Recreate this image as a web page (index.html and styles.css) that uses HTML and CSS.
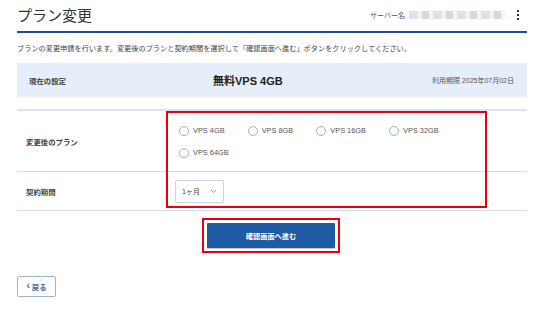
FILE: index.html
```html
<!DOCTYPE html>
<html lang="ja">
<head>
    <meta charset="UTF-8">
    <meta name="viewport" content="width=device-width, initial-scale=1.0">
    <title>プラン変更</title>
    <link rel="stylesheet" href="styles.css">
</head>
<body>
    <div class="page">
        <header class="page-header">
            <h1>プラン変更</h1>
            <div class="server">
                <span class="server-label">サーバー名</span>
                <span class="server-name"></span>
                <span class="kebab"><i></i><i></i><i></i></span>
            </div>
        </header>

        <p class="lead">プランの変更申請を行います。変更後のプランと契約期間を選択して「確認画面へ進む」ボタンをクリックしてください。</p>

        <div class="current">
            <span class="current-label">現在の設定</span>
            <span class="current-plan">無料VPS 4GB</span>
            <span class="current-limit">利用期限 2025年07月02日</span>
        </div>

        <div class="form-table">
            <div class="row">
                <div class="row-label">変更後のプラン</div>
                <div class="row-value">
                    <div class="radios">
                        <label class="radio"><span class="circle"></span>VPS 4GB</label>
                        <label class="radio"><span class="circle"></span>VPS 8GB</label>
                        <label class="radio"><span class="circle"></span>VPS 16GB</label>
                        <label class="radio"><span class="circle"></span>VPS 32GB</label>
                        <label class="radio"><span class="circle"></span>VPS 64GB</label>
                    </div>
                </div>
            </div>
            <div class="row row-term">
                <div class="row-label">契約期間</div>
                <div class="row-value">
                    <div class="select">
                        <span>1ヶ月</span>
                        <svg width="7" height="5" viewBox="0 0 7 5"><path d="M1 1l2.5 2.5L6 1" fill="none" stroke="#8a9bb3" stroke-width="1"/></svg>
                    </div>
                </div>
            </div>
            <div class="highlight highlight-fields"></div>
        </div>

        <div class="actions">
            <div class="submit-wrap">
                <button class="submit">確認画面へ進む</button>
            </div>
        </div>

        <button class="back"><span class="back-arrow">‹</span>戻る</button>
    </div>
</body>
</html>
```

FILE: styles.css
```css
* {
    margin: 0;
    padding: 0;
    box-sizing: border-box;
}

body {
    font-family: "Liberation Sans", "Noto Sans CJK JP", sans-serif;
    background: #fff;
    color: #333;
}

.page {
    width: 510px;
    margin-left: 17px;
}

.page-header {
    display: flex;
    justify-content: space-between;
    align-items: center;
    height: 33px;
    border-bottom: 2px solid #1f4e99;
}

h1 {
    font-size: 15px;
    font-weight: normal;
    color: #333;
    line-height: 1;
    margin-top: -1px;
}

.server {
    display: flex;
    align-items: center;
    margin-top: -1px;
}

.server-label {
    font-size: 7px;
    color: #555;
    margin-right: 4px;
}

.server-name {
    display: block;
    width: 96px;
    height: 8px;
    background: repeating-linear-gradient(90deg, #d8dbe0 0 9px, #eceef1 9px 13px, #c9cdd3 13px 20px, #f2f3f5 20px 24px);
    opacity: 0.8;
}

.kebab {
    display: flex;
    flex-direction: column;
    gap: 2px;
    margin-left: 12px;
    margin-right: 8px;
}

.kebab i {
    display: block;
    width: 2px;
    height: 2px;
    background: #333;
}

.lead {
    font-size: 7.2px;
    color: #444;
    margin-top: 11px;
    line-height: 10px;
}

.current {
    display: flex;
    align-items: center;
    height: 34px;
    margin-top: 9px;
    padding: 0 13px 0 12px;
    background: #e6eff9;
}

.current-label {
    width: 184px;
    font-size: 7.4px;
    font-weight: bold;
    color: #444;
}

.current-plan {
    font-size: 11px;
    font-weight: bold;
    color: #222;
}

.current-limit {
    margin-left: auto;
    font-size: 7px;
    color: #555;
}

.form-table {
    position: relative;
    margin-top: 12px;
    border-top: 2px solid #dde3ec;
}

.row {
    display: flex;
    align-items: center;
    border-bottom: 1px solid #d3dbe6;
}

.row:first-child {
    height: 61px;
}

.row-term {
    height: 39px;
}

.row-label {
    width: 158px;
    padding-left: 9px;
    font-size: 7.4px;
    font-weight: bold;
    color: #444;
}

.row-value {
    width: 310px;
}

.radios {
    display: flex;
    flex-wrap: wrap;
    column-gap: 23px;
    row-gap: 11px;
    padding-left: 4px;
    margin-top: 1px;
}

.radio {
    display: flex;
    align-items: center;
    gap: 4px;
    font-size: 7.4px;
    color: #555;
    line-height: 11px;
}

.circle {
    display: block;
    width: 10px;
    height: 10px;
    border: 1px solid #9fb0c5;
    border-radius: 50%;
    background: #fff;
}

.select {
    display: flex;
    align-items: center;
    justify-content: space-between;
    width: 49px;
    height: 23px;
    padding: 0 6px 0 6px;
    border: 1px solid #c9d3e0;
    border-radius: 2px;
    font-size: 7px;
    color: #444;
}

.highlight {
    position: absolute;
    border: 2px solid #e60012;
    pointer-events: none;
}

.highlight-fields {
    left: 149px;
    top: 0;
    width: 321px;
    height: 97px;
}

.actions {
    display: flex;
    justify-content: center;
    margin-top: 7px;
    padding-right: 2px;
}

.submit-wrap {
    border: 2px solid #e60012;
    padding: 3px;
}

.submit {
    display: block;
    width: 128px;
    height: 25px;
    border: none;
    border-radius: 1px;
    background: #1e5ba3;
    box-shadow: 0 1px 1px rgba(0, 0, 0, 0.25);
    color: #fff;
    font-family: inherit;
    font-size: 7.2px;
    font-weight: bold;
}

.back {
    display: flex;
    align-items: center;
    justify-content: center;
    gap: 2px;
    width: 39px;
    height: 21px;
    margin-top: 23px;
    border: 1px solid #9bb4d4;
    border-radius: 2px;
    background: #fff;
    color: #4a6c99;
    font-family: inherit;
    font-size: 7.4px;
    font-weight: bold;
}

.back-arrow {
    font-size: 10px;
    line-height: 1;
    margin-top: -1px;
}
```
